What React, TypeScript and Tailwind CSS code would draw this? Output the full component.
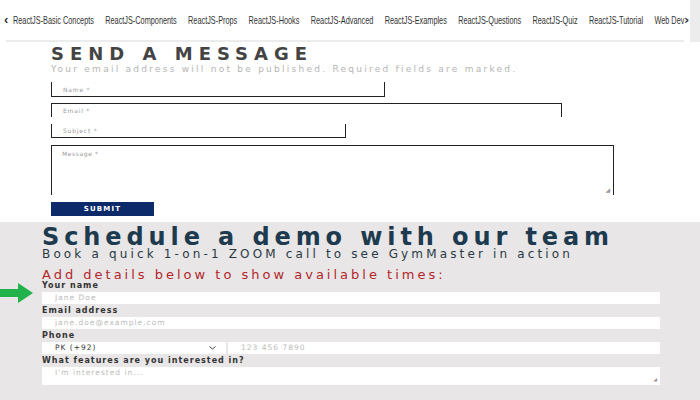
const navItems = [
  "ReactJS-Basic Concepts",
  "ReactJS-Components",
  "ReactJS-Props",
  "ReactJS-Hooks",
  "ReactJS-Advanced",
  "ReactJS-Examples",
  "ReactJS-Questions",
  "ReactJS-Quiz",
  "ReactJS-Tutorial",
  "Web Dev",
];

export default function App() {
  return (
    <div className="w-[700px] h-[400px] overflow-hidden bg-white font-['DejaVu_Sans',sans-serif]">
      <TopNav />
      <SendMessage />
      <DemoForm />
    </div>
  );
}

/* ===============================
   TOP NAV
================================= */
function TopNav() {
  return (
    <div className="relative h-[42px] flex">
      <div className="flex-1 flex flex-col overflow-hidden">
        <div className="h-[40px] flex items-center pl-[4px] text-[#333] font-['Liberation_Sans',sans-serif] text-[11px] whitespace-nowrap">
          <span className="text-[13px] font-bold mr-[5px]">‹</span>
          <div className="flex gap-[17px] origin-left scale-x-[0.665] w-[1000px] shrink-0">
            {navItems.map((item) => (
              <span key={item}>{item}</span>
            ))}
          </div>
        </div>
        <div className="mx-[6px] h-[2px] bg-[#ececec]" />
      </div>
      <span className="absolute left-[684px] top-[12px] text-[13px] font-bold text-[#333] leading-[16px]">
        ›
      </span>
      <div className="w-[10px] bg-[#ececec]" />
    </div>
  );
}

/* ===============================
   SEND A MESSAGE
================================= */
function SendMessage() {
  return (
    <div className="h-[180px] pl-[51px] pt-[2px]">
      <h2 className="text-[18px] leading-[20px] font-bold text-[#444] tracking-[6px]">
        SEND A MESSAGE
      </h2>
      <p className="text-[9px] leading-[10px] text-[#b5b5b5] tracking-[2.25px] whitespace-nowrap">
        Your email address will not be published. Required fields are marked.
      </p>

      <div className="mt-[8px] flex flex-col">
        <Box w="w-[334px]" h="h-[15px]" border="border-l border-r border-b border-[#222]" label="Name *" />
        <div className="mt-[6px]">
          <Box w="w-[511px]" h="h-[14px]" border="border-l border-r border-t border-[#222]" label="Email *" />
        </div>
        <div className="mt-[7px]">
          <Box w="w-[295px]" h="h-[14px]" border="border-l border-r border-b border-[#222]" label="Subject *" />
        </div>
        <div className="mt-[7px] w-[563px] h-[50px] border-l border-r border-t border-[#222] relative">
          <span className="absolute left-[10px] top-[3px] text-[6px] text-[#999] tracking-[0.6px]">
            Message *
          </span>
          <span className="absolute right-[3px] bottom-[1px] text-[6px] text-[#999]">◢</span>
        </div>
      </div>

      <button className="mt-[7px] w-[103px] h-[14px] bg-[#0c2a6a] text-white text-[7px] font-bold tracking-[1.2px] flex items-center justify-center">
        SUBMIT
      </button>
    </div>
  );
}

function Box({ w, h, border, label }: any) {
  return (
    <div className={`${w} ${h} ${border} flex items-center pl-[11px]`}>
      <span className="text-[6px] text-[#999] tracking-[0.8px]">{label}</span>
    </div>
  );
}

/* ===============================
   DEMO FORM
================================= */
function DemoForm() {
  return (
    <div className="relative h-[178px] bg-[#e8e6e6] pl-[42px] pt-[4px]">
      <h2 className="text-[24px] leading-[22px] font-bold text-[#1d3a4e] tracking-[4.9px] whitespace-nowrap">
        Schedule a demo with our team
      </h2>
      <p className="mt-[1px] text-[12px] leading-[11px] text-[#2a3a44] tracking-[3.15px] whitespace-nowrap">
        Book a quick 1-on-1 ZOOM call to see GymMaster in action
      </p>
      <p className="mt-[9px] text-[13px] leading-[12px] text-[#b3262b] tracking-[3px] whitespace-nowrap">
        Add details below to show available times:
      </p>

      {/* arrow */}
      <svg className="absolute left-0 top-[61px]" width="34" height="20" viewBox="0 0 34 20">
        <path d="M0 6 H18 V0 L33 10 L18 20 V14 H0 Z" fill="#21b24b" />
      </svg>

      <Label first>Your name</Label>
      <Field placeholder="Jane Doe" />
      <Label>Email address</Label>
      <Field placeholder="jane.doe@example.com" />
      <Label>Phone</Label>
      <div className="mt-[1px] flex w-[618px] gap-[2px]">
        <div className="w-[184px] h-[12px] bg-white flex items-center pl-[13px] pr-[10px] text-[7.5px] text-[#333] tracking-[1px]">
          <span className="flex-1">PK (+92)</span>
          <svg width="7" height="4" viewBox="0 0 7 4">
            <path d="M0.5 0.5 L3.5 3 L6.5 0.5" stroke="#444" fill="none" strokeWidth="1" />
          </svg>
        </div>
        <div className="flex-1 h-[12px] bg-white flex items-center pl-[13px] text-[7.5px] text-[#bbb] tracking-[1px]">
          123 456 7890
        </div>
      </div>
      <Label>What features are you interested in?</Label>
      <div className="mt-[1px] relative w-[618px] h-[18px] bg-white pl-[13px] text-[7.5px] leading-[12px] text-[#bbb] tracking-[1px]">
        I'm interested in...
        <span className="absolute right-[2px] bottom-[0px] text-[5px] text-[#999]">◢</span>
      </div>
    </div>
  );
}

function Label({ children, first }: any) {
  return (
    <div
      className={`${first ? "mt-0" : "mt-[2px]"} text-[8px] leading-[10px] font-bold text-[#333] tracking-[1px]`}
    >
      {children}
    </div>
  );
}

function Field({ placeholder }: any) {
  return (
    <div className="mt-[1px] w-[618px] h-[12px] bg-white flex items-center pl-[13px] text-[7.5px] text-[#bbb] tracking-[1px]">
      {placeholder}
    </div>
  );
}
